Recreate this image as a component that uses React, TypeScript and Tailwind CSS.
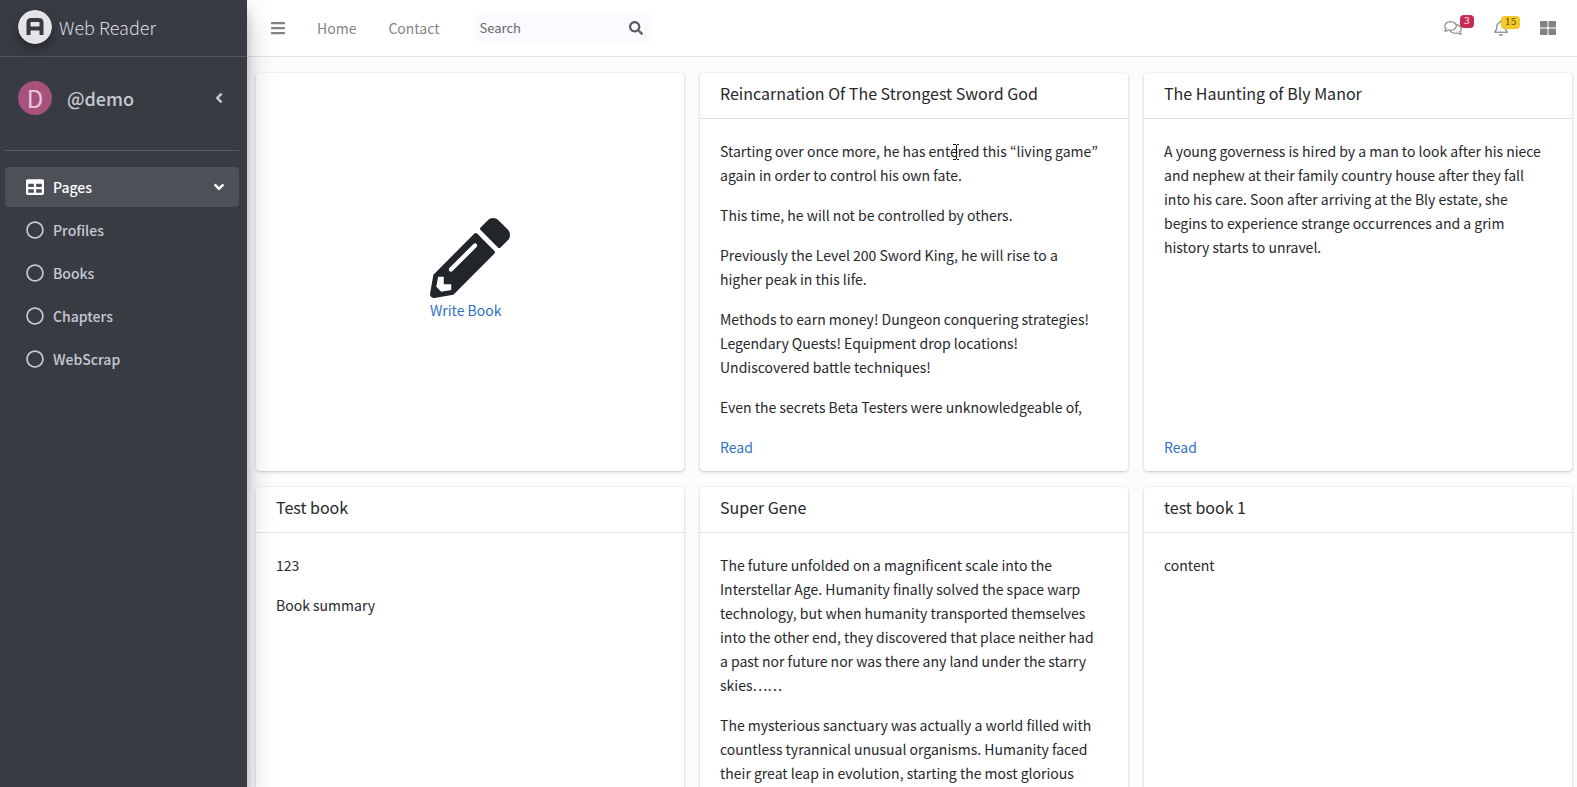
import {
  FaAngleDown,
  FaAngleLeft,
  FaBars,
  FaPencilAlt,
  FaRegBell,
  FaRegCircle,
  FaRegComments,
  FaSearch,
  FaTable,
  FaThLarge,
} from "react-icons/fa";

const links = ["Profiles", "Books", "Chapters", "WebScrap"];

type Book = { title: string; summary: string[] };

const books: Book[] = [
  {
    title: "Reincarnation Of The Strongest Sword God",
    summary: [
      "Starting over once more, he has entered this “living game” again in order to control his own fate.",
      "This time, he will not be controlled by others.",
      "Previously the Level 200 Sword King, he will rise to a higher peak in this life.",
      "Methods to earn money! Dungeon conquering strategies! Legendary Quests! Equipment drop locations! Undiscovered battle techniques!",
      "Even the secrets Beta Testers were unknowledgeable of,",
    ],
  },
  {
    title: "The Haunting of Bly Manor",
    summary: [
      "A young governess is hired by a man to look after his niece and nephew at their family country house after they fall into his care. Soon after arriving at the Bly estate, she begins to experience strange occurrences and a grim history starts to unravel.",
    ],
  },
  { title: "Test book", summary: ["123", "Book summary"] },
  {
    title: "Super Gene",
    summary: [
      "The future unfolded on a magnificent scale into the Interstellar Age. Humanity finally solved the space warp technology, but when humanity transported themselves into the other end, they discovered that place neither had a past nor future nor was there any land under the starry skies……",
      "The mysterious sanctuary was actually a world filled with countless tyrannical unusual organisms. Humanity faced their great leap in evolution, starting the most glorious",
    ],
  },
  { title: "test book 1", summary: ["content"] },
];

function TextCursor() {
  return (
    <svg
      aria-hidden="true"
      viewBox="0 0 8 16"
      className="pointer-events-none absolute top-36 left-[952px] z-20 h-4 w-2"
      fill="none"
      stroke="#111"
      shapeRendering="crispEdges"
    >
      <path d="M1 .5h2.5M4.500 .5H7M4 1v14M1 15.500h2.500M4.500 15.500H7" />
    </svg>
  );
}

function Logo() {
  return (
    <svg viewBox="0 0 34 34" className="size-[34px] rounded-full shadow-[0_5px_8px_rgba(0,0,0,0.3)]" aria-hidden="true">
      <circle cx="17" cy="17" r="17" fill="#e3e3e8" />
      <path
        d="M10.500 25V12.500q0-2.500 2.500-2.500h8q2.500 0 2.500 2.500V25M10.500 18.500h13"
        fill="none"
        stroke="#37393e"
        strokeWidth="4"
      />
    </svg>
  );
}

function Sidebar() {
  return (
    <aside className="z-10 flex w-[247px] shrink-0 flex-col bg-[#383b42] text-[#c6c9d3] shadow-[0_14px_28px_rgba(0,0,0,0.22),0_10px_10px_rgba(0,0,0,0.18)]">
      <a href="#" className="flex h-[57px] items-center gap-[7px] border-b border-[#53565d] pb-0.5 pl-[18px]">
        <Logo />
        <span className="text-lg font-light text-[#d8dae2]">Web Reader</span>
      </a>
      <div className="flex grow flex-col pr-2 pl-[5px]">
        <div className="flex h-[94px] items-center border-b border-[#5a5d64] pr-3 pb-3 pl-[13px]">
          <span className="flex size-[34px] items-center justify-center rounded-full bg-[#a9517d] text-2xl text-[#e6c9dc]">
            D
          </span>
          <a href="#" className="ml-[15px] grow text-lg font-medium">
            @demo
          </a>
          <FaAngleLeft className="size-4" />
        </div>
        <nav className="mt-4 flex flex-col gap-[3px] text-sm font-medium">
          <a href="#" className="flex h-10 items-center gap-[9px] rounded bg-[#4d5057] pr-3 pl-[21px] text-white">
            <FaTable className="size-[18px]" />
            <span className="grow">Pages</span>
            <FaAngleDown className="size-4" />
          </a>
          {links.map((label) => (
            <a key={label} href="#" className="flex h-10 items-center gap-[9px] pl-[21px]">
              <FaRegCircle className="size-[18px]" />
              <span>{label}</span>
            </a>
          ))}
        </nav>
      </div>
    </aside>
  );
}

const badgeStyle =
  "absolute -top-1 rounded px-1 font-['DejaVu_Serif',serif] text-[9px] leading-[13px]";

function TopBar() {
  return (
    <header className="flex h-[57px] shrink-0 items-center border-b border-[#e2e2e6] bg-white pr-[21px] pl-[23px] text-sm text-[#838387]">
      <button type="button" aria-label="Toggle menu">
        <FaBars className="size-4" />
      </button>
      <a href="#" className="ml-[31px]">
        Home
      </a>
      <a href="#" className="ml-8">
        Contact
      </a>
      <form className="ml-9 flex h-7 w-44 items-center rounded-sm bg-[#fafaff] pr-2 pl-1">
        <input
          type="search"
          aria-label="Search"
          placeholder="Search"
          className="w-full min-w-0 bg-transparent text-[13px] outline-none placeholder:text-[#66676c]"
        />
        <button type="button" aria-label="Submit search" className="text-[#5c5d62]">
          <FaSearch className="size-3.5" />
        </button>
      </form>
      <div className="ml-auto flex items-center gap-[31px]">
        <button type="button" aria-label="Messages" className="relative">
          <FaRegComments className="size-[18px] stroke-white [stroke-width:14px]" />
          <span className={`${badgeStyle} left-4 bg-[#c92a55] text-white`}>3</span>
        </button>
        <button type="button" aria-label="Notifications" className="relative">
          <FaRegBell className="size-4 stroke-white [stroke-width:10px]" />
          <span className={`${badgeStyle} left-2 bg-[#f5c927] text-[#54430d]`}>15</span>
        </button>
        <button type="button" aria-label="Widgets">
          <FaThLarge className="size-4" />
        </button>
      </div>
    </header>
  );
}

const cardStyle =
  "flex min-w-0 flex-col rounded bg-white shadow-[0_0_1px_rgba(0,0,0,0.13),0_1px_3px_rgba(0,0,0,0.2)]";

function BookCard({ title, summary }: Book) {
  return (
    <article className={cardStyle}>
      <h2 className="border-b border-[#e2e2e6] px-5 pt-2 pb-3 text-base leading-[25px]">{title}</h2>
      <div className="pt-5 pr-7 pb-3 pl-5">
        <div className="flex h-72 flex-col gap-4 overflow-hidden">
          {summary.map((text) => (
            <p key={text} className="shrink-0">
              {text}
            </p>
          ))}
        </div>
        <a href="#" className="mt-2 block text-[#3172c4]">
          Read
        </a>
      </div>
    </article>
  );
}

export default function App() {
  return (
    <div className="relative flex h-screen overflow-hidden bg-[#fcfcff] font-['Noto_Sans_CJK_KR','Noto_Sans',sans-serif] text-sm text-[#26282c]">
      <Sidebar />
      <div className="flex min-w-0 grow flex-col">
        <TopBar />
        <main className="grid grow auto-rows-min grid-cols-3 gap-4 overflow-y-auto pt-4 pr-[5px] pb-4 pl-[9px] leading-6 [scrollbar-width:none]">
          <section className={`${cardStyle} items-center justify-center`}>
            <a href="#" className="block pb-1 text-[#3172c4]">
              <FaPencilAlt className="size-20 text-[#22262b]" />
              Write Book
            </a>
          </section>
          {books.map((book) => (
            <BookCard key={book.title} {...book} />
          ))}
        </main>
      </div>
      <TextCursor />
    </div>
  );
}
